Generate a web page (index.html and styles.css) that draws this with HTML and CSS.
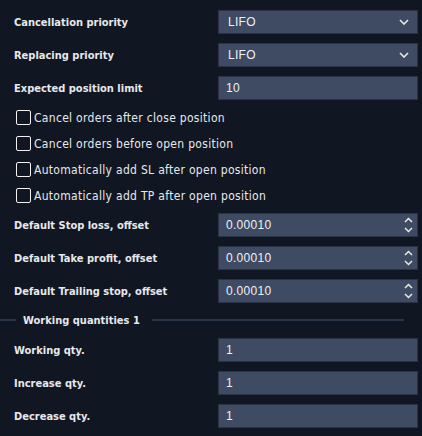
FILE: index.html
```html
<!DOCTYPE html>
<html>
<head>
<meta charset="utf-8">
<link rel="stylesheet" href="styles.css">
</head>
<body>
<div class="panel">
  <div class="row"><span class="label">Cancellation priority</span><div class="field select"><span>LIFO</span><svg class="chev" width="10" height="6" viewBox="0 0 10 6"><path d="M1 1 L5 5 L9 1" fill="none" stroke="#e8e8e8" stroke-width="1.6"/></svg></div></div>
  <div class="row"><span class="label">Replacing priority</span><div class="field select"><span>LIFO</span><svg class="chev" width="10" height="6" viewBox="0 0 10 6"><path d="M1 1 L5 5 L9 1" fill="none" stroke="#e8e8e8" stroke-width="1.6"/></svg></div></div>
  <div class="row"><span class="label">Expected position limit</span><div class="field"><span>10</span></div></div>

  <div class="checks">
    <label class="check"><span class="box"></span><span>Cancel orders after close position</span></label>
    <label class="check"><span class="box"></span><span>Cancel orders before open position</span></label>
    <label class="check"><span class="box"></span><span>Automatically add SL after open position</span></label>
    <label class="check"><span class="box"></span><span>Automatically add TP after open position</span></label>
  </div>

  <div class="row"><span class="label">Default Stop loss, offset</span><div class="field spin"><span>0.00010</span><svg class="arrows" width="9" height="16" viewBox="0 0 9 16"><path d="M1 5 L4.5 1.5 L8 5 M1 11 L4.5 14.5 L8 11" fill="none" stroke="#e8e8e8" stroke-width="1.5"/></svg></div></div>
  <div class="row"><span class="label">Default Take profit, offset</span><div class="field spin"><span>0.00010</span><svg class="arrows" width="9" height="16" viewBox="0 0 9 16"><path d="M1 5 L4.5 1.5 L8 5 M1 11 L4.5 14.5 L8 11" fill="none" stroke="#e8e8e8" stroke-width="1.5"/></svg></div></div>
  <div class="row"><span class="label">Default Trailing stop, offset</span><div class="field spin"><span>0.00010</span><svg class="arrows" width="9" height="16" viewBox="0 0 9 16"><path d="M1 5 L4.5 1.5 L8 5 M1 11 L4.5 14.5 L8 11" fill="none" stroke="#e8e8e8" stroke-width="1.5"/></svg></div></div>

  <div class="divider"><span class="line short"></span><span class="dtext">Working quantities 1</span><span class="line long"></span></div>

  <div class="row"><span class="label">Working qty.</span><div class="field"><span>1</span></div></div>
  <div class="row"><span class="label">Increase qty.</span><div class="field"><span>1</span></div></div>
  <div class="row"><span class="label">Decrease qty.</span><div class="field"><span>1</span></div></div>
</div>
</body>
</html>
```

FILE: styles.css
```css
html, body {
  margin: 0;
  padding: 0;
  background: #111722;
}
body {
  width: 422px;
  height: 436px;
  overflow: hidden;
  font-family: "DejaVu Sans Condensed", "DejaVu Sans", sans-serif;
  color: #e6e8ec;
}
.panel {
  display: flex;
  flex-direction: column;
  gap: 9px;
  padding: 10px 4px 0 14px;
}
.row {
  display: flex;
  align-items: center;
  height: 24px;
}
.label {
  width: 204px;
  font-size: 11px;
  font-weight: bold;
}
.field {
  box-sizing: border-box;
  width: 200px;
  height: 24px;
  background: #3f4a63;
  border: 1px solid #2b3244;
  display: flex;
  align-items: center;
  padding: 0 8px 0 7px;
  font-family: "Liberation Sans", Arial, sans-serif;
  font-size: 12px;
  letter-spacing: 0.3px;
  color: #eef0f4;
}
.field span { flex: 1; }
.select span { padding-left: 2px; }
.spin { padding-right: 4px; }
.checks {
  display: flex;
  flex-direction: column;
  gap: 11px;
  margin-top: 1px;
  margin-bottom: 1px;
}
.check {
  display: flex;
  align-items: center;
  gap: 3px;
  height: 15px;
  font-size: 12px;
  letter-spacing: 0.3px;
  padding-left: 2px;
}
.box {
  box-sizing: border-box;
  width: 15px;
  height: 15px;
  border: 1px solid #f2f2f2;
  border-radius: 2px;
}
.divider {
  display: flex;
  align-items: center;
  margin-left: -14px;
  margin-top: 0;
  margin-bottom: 1px;
  height: 16px;
}
.line {
  height: 2px;
  background: #2b3548;
}
.line.short { width: 16px; }
.line.long { width: 252px; }
.dtext {
  font-size: 11px;
  font-weight: bold;
  padding: 0 12px 0 7px;
}
```
